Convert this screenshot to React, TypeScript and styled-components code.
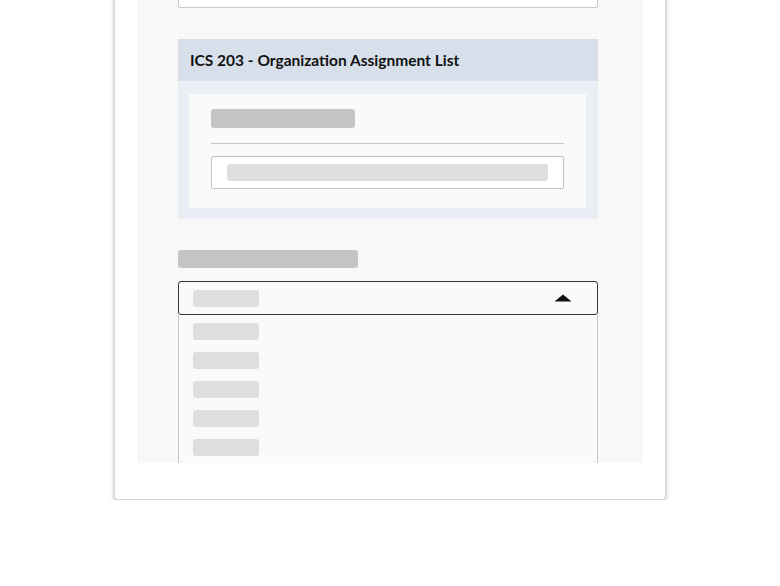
import React from "react";
import styled, { createGlobalStyle } from "styled-components";

const Global = createGlobalStyle`
  html, body { margin: 0; padding: 0; background: #ffffff; }
  body { font-family: Lato, "Open Sans", Arial, sans-serif; overflow: hidden; }
`;

const Card = styled.div`
  box-sizing: border-box;
  width: 552px;
  margin: -61px auto 0;
  padding: 24px 23px 36px;
  background: #ffffff;
  border: 1px solid #d6d6d6;
  border-radius: 4px;
  box-shadow: 0 2px 4px rgba(0, 0, 0, 0.28);
`;

const Panel = styled.div`
  position: relative;
  box-sizing: border-box;
  height: 499px;
  padding: 10px 43px 0 39px;
  background: #f8f8f8;
  border-left: 1px solid #efefef;
  border-right: 1px solid #efefef;
  overflow: hidden;
`;

const Field = styled.div`
  box-sizing: border-box;
  height: 34px;
  border: 1px solid #c9c9c9;
  border-radius: 2px;
  background: #ffffff;
`;

const Section = styled.section`
  margin-top: 31px;
  background: #e9eff5;
`;

const SectionHeader = styled.h2`
  margin: 0;
  height: 42px;
  display: flex;
  align-items: center;
  padding: 0 12px;
  background: #d7e0ea;
  font-family: Lato, "Open Sans", Arial, sans-serif;
  font-weight: 700;
  font-size: 15.5px;
  color: #111111;
`;

const SectionBody = styled.div`
  padding: 13px 12px 11px 11px;
`;

const InnerBox = styled.div`
  padding: 15px 22px 19px;
  background: #fafafa;
`;

const Bar = styled.div<{ $w: number; $h: number; $shade: "dark" | "light" }>`
  width: ${(p) => p.$w}px;
  height: ${(p) => p.$h}px;
  border-radius: 3px;
  background: ${(p) => (p.$shade === "dark" ? "#c4c4c4" : "#dedede")};
`;

const Divider = styled.hr`
  margin: 15px 0 12px;
  border: 0;
  border-top: 1px solid #c6c6c6;
`;

const InputBox = styled.div`
  box-sizing: border-box;
  height: 33px;
  padding: 7px 15px 0 15px;
  border: 1px solid #c2c2c2;
  border-radius: 2px;
  background: #ffffff;
`;

const WideBar = styled.div`
  height: 17px;
  border-radius: 3px;
  background: #dedede;
`;

const FieldGroup = styled.div`
  margin-top: 31px;
  display: flex;
  flex-direction: column;
  gap: 13px;
`;

const SelectWrap = styled.div`
  position: relative;
`;

const Select = styled.div`
  box-sizing: border-box;
  height: 34px;
  display: flex;
  align-items: center;
  justify-content: space-between;
  padding: 0 25px 0 14px;
  border: 1.5px solid #333333;
  border-radius: 3px;
  background: #fafafa;
`;

const Caret = styled.svg`
  width: 18px;
  height: 8px;
  display: block;
`;

const Menu = styled.ul`
  position: absolute;
  left: 0;
  right: 0;
  top: 100%;
  margin: 0;
  padding: 8px 14px 20px;
  list-style: none;
  background: #fafafa;
  border-left: 1.5px solid #c8c8c8;
  border-right: 1.5px solid #c8c8c8;
  display: flex;
  flex-direction: column;
  gap: 12px;
`;

const MenuItem = styled.li`
  width: 66px;
  height: 17px;
  border-radius: 3px;
  background: #dedede;
`;

export default function App() {
  return (
    <>
      <Global />
      <Card>
        <Panel>
          <Field />
          <Section>
            <SectionHeader>ICS 203 - Organization Assignment List</SectionHeader>
            <SectionBody>
              <InnerBox>
                <Bar $w={144} $h={19} $shade="dark" />
                <Divider />
                <InputBox>
                  <WideBar />
                </InputBox>
              </InnerBox>
            </SectionBody>
          </Section>
          <FieldGroup>
            <Bar $w={180} $h={18} $shade="dark" />
            <SelectWrap>
              <Select>
                <Bar $w={66} $h={17} $shade="light" />
                <Caret viewBox="0 0 18 8">
                  <path d="M9 0.5 L17.5 7.5 L0.5 7.5 Z" fill="#111" />
                </Caret>
              </Select>
              <Menu>
                {[0, 1, 2, 3, 4, 5].map((i) => (
                  <MenuItem key={i} />
                ))}
              </Menu>
            </SelectWrap>
          </FieldGroup>
        </Panel>
      </Card>
    </>
  );
}
